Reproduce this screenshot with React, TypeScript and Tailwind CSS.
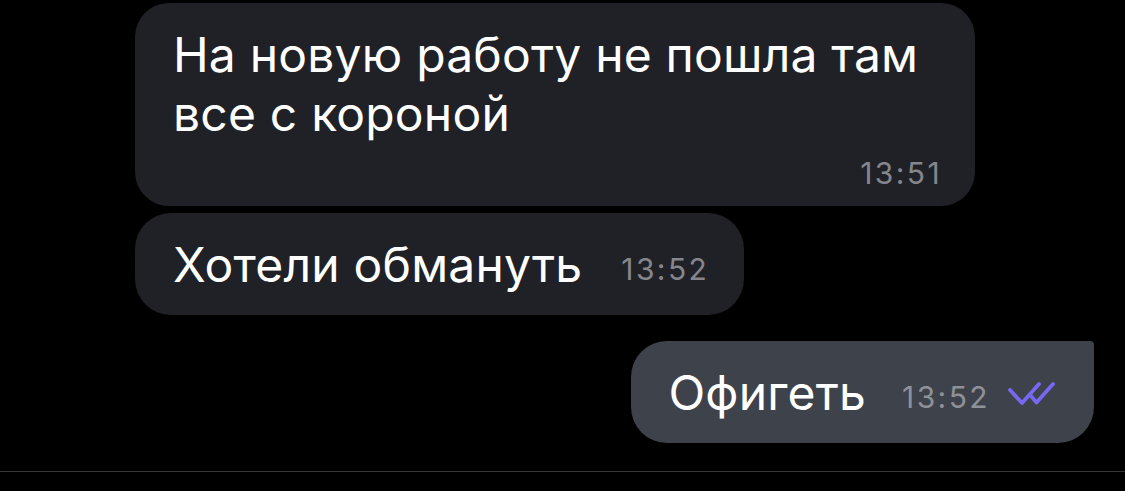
import React from 'react';

const font = { fontFamily: 'Inter, "Liberation Sans", Arial, sans-serif' };

const DoubleCheck: React.FC = () => (
  <svg width="48" height="26" viewBox="0 0 48 26" fill="none" className="shrink-0">
    <path d="M3 10 L15 23 L32 4" stroke="#7668f0" strokeWidth="3.8" strokeLinecap="round" strokeLinejoin="round" />
    <path d="M24 16 L29.5 22.5 L46 4" stroke="#7668f0" strokeWidth="3.8" strokeLinecap="round" strokeLinejoin="round" />
  </svg>
);

const App: React.FC = () => {
  return (
    <div className="h-[491px] w-[1125px] bg-black overflow-hidden flex flex-col" style={font}>
      {/* Messages */}
      <div className="flex flex-col pt-[3px] px-[31px] pl-[135px]">
        {/* Incoming 1 */}
        <div className="w-[840px] rounded-[34px] bg-[#202127] pt-[22px] pb-[16px] pl-[38px] pr-[33px]">
          <p className="text-[48px] leading-[59px] tracking-[0.2px] text-white">
            На новую работу не пошла там все с короной
          </p>
          <div className="mt-[13px] flex justify-end">
            <span className="text-[30px] leading-[34px] tracking-[2.4px] text-[#85868c]">13:51</span>
          </div>
        </div>

        {/* Incoming 2 */}
        <div className="mt-[7px] self-start rounded-[36px] bg-[#202127] h-[102px] pl-[38px] pr-[35px] flex items-center">
          <div className="flex items-baseline">
            <span className="text-[48px] leading-[59px] tracking-[0.2px] text-white">Хотели обмануть</span>
            <span className="ml-[39px] text-[30px] leading-[34px] tracking-[2.4px] text-[#85868c] relative -top-[2px]">13:52</span>
          </div>
        </div>

        {/* Outgoing */}
        <div className="mt-[26px] self-end rounded-[36px] rounded-tr-[4px] bg-[#3e424a] h-[102px] pl-[37px] pr-[39px] flex items-center">
          <div className="flex items-baseline">
            <span className="text-[48px] leading-[59px] tracking-[0.2px] text-white">Офигеть</span>
            <span className="ml-[36px] text-[30px] leading-[34px] tracking-[2.4px] text-[#8e9198] relative -top-[2px]">13:52</span>
            <span className="ml-[17px] self-center relative top-[1px]">
              <DoubleCheck />
            </span>
          </div>
        </div>
      </div>

      {/* Input bar separator */}
      <div className="mt-[28px] border-t border-[#38383a]" />
    </div>
  );
};

export default App;
